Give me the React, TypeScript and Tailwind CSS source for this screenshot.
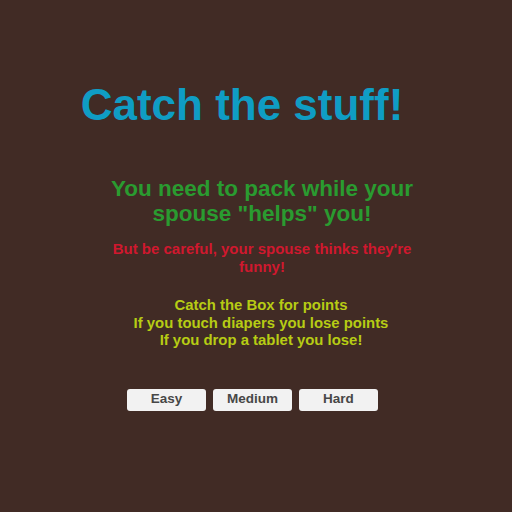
export default function App() {
  return (
    <div
      className="flex h-[512px] w-[512px] flex-col items-center bg-[#412b25]"
      style={{ fontFamily: '"Liberation Sans", Arial, sans-serif' }}
    >
      {/* title */}
      <h1 className="mt-[80px] mr-[28px] text-[44px] font-bold leading-[50px] text-[#0f9dc4]">
        Catch the stuff!
      </h1>

      {/* intro */}
      <p className="mt-[46px] ml-[12px] w-[330px] text-center text-[22.5px] font-bold leading-[25px] text-[#2a9b30]">
        You need to pack while your spouse "helps" you!
      </p>

      <p className="mt-[14px] ml-[12px] w-[310px] text-center text-[15px] font-bold leading-[18px] text-[#d0182e]">
        But be careful, your spouse thinks they're funny!
      </p>

      {/* rules */}
      <div className="mt-[21px] ml-[10px] text-center text-[14.9px] font-bold leading-[17.5px] text-[#b7cc14]">
        <p>Catch the Box for points</p>
        <p>If you touch diapers you lose points</p>
        <p>If you drop a tablet you lose!</p>
      </div>

      {/* difficulty */}
      <div className="mt-[39px] mr-[7px] flex gap-[7px]">
        {["Easy", "Medium", "Hard"].map((level) => (
          <button
            key={level}
            type="button"
            className="h-[22px] w-[79px] rounded-[3px] bg-[#f2f2f2] text-[13.5px] font-bold text-[#474747]"
          >
            {level}
          </button>
        ))}
      </div>
    </div>
  );
}
